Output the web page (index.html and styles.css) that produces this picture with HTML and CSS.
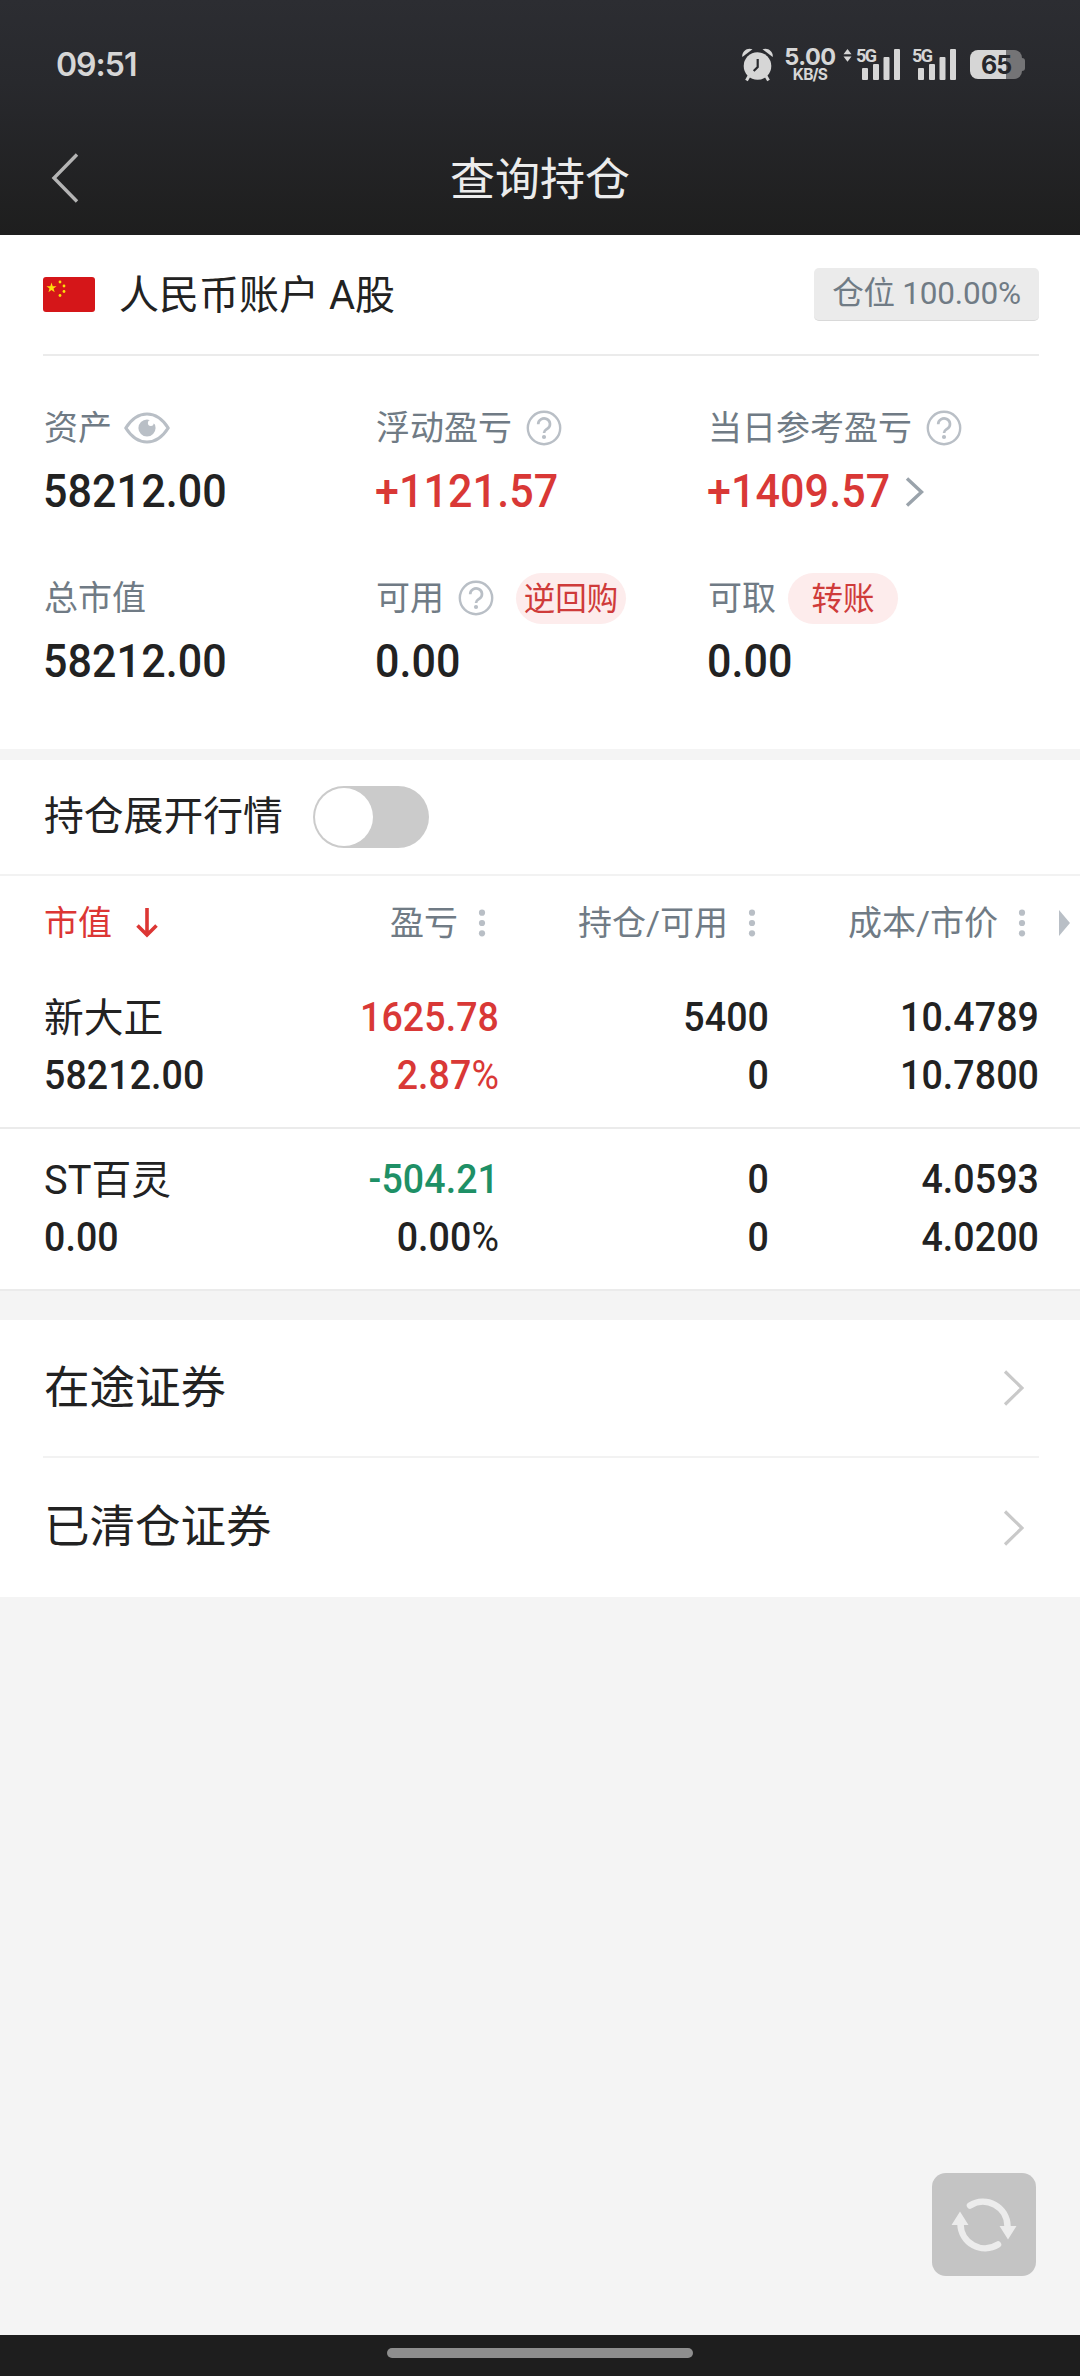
FILE: index.html
```html
<!DOCTYPE html>
<html lang="zh-CN">
<head>
<meta charset="utf-8">
<title>查询持仓</title>
<link rel="stylesheet" href="styles.css">
</head>
<body>
<svg class="defs" width="0" height="0" aria-hidden="true">
  <symbol id="help" viewBox="0 0 36 36">
    <circle cx="18" cy="18" r="16.2" fill="none" stroke="#b9bfc6" stroke-width="2.4"/>
    <path d="M12.2 14.2a5.9 5.6 0 1 1 9.3 4.4c-2 1.4-3.5 2-3.5 4.4" fill="none" stroke="#b9bfc6" stroke-width="2.7"/>
    <circle cx="18" cy="27" r="2.1" fill="#b9bfc6"/>
  </symbol>
  <symbol id="dots" viewBox="0 0 8 28">
    <g fill="#b9bfc6"><circle cx="4" cy="3.7" r="3.1"/><circle cx="4" cy="14" r="3.1"/><circle cx="4" cy="24.3" r="3.1"/></g>
  </symbol>
  <symbol id="next" viewBox="0 0 22 36">
    <path d="M3 1.500L20 18 3 34.500" fill="none" stroke="#c9c9c9" stroke-width="3.2"/>
  </symbol>
  <symbol id="bars" viewBox="0 0 38 31">
    <g fill="#d6d6d6"><rect y="19" width="6" height="12" rx="1"/><rect x="11" y="15" width="6" height="16" rx="1"/><rect x="21.500" y="8" width="6" height="23" rx="1"/><rect x="32" width="6" height="31" rx="1"/></g>
  </symbol>
</svg>

<header class="top">
  <div class="status">
    <span class="clock">09:51</span>
    <div class="tray">
      <svg class="alarm" width="31" height="34" viewBox="0 0 31 34">
        <g fill="#d6d6d6"><circle cx="15.500" cy="18" r="13.800"/>
        <path d="M0.300 9C-0.500 3.500 5 -1 10.500 1.200z"/><path d="M30.700 9C31.500 3.500 26 -1 20.500 1.200z"/></g>
        <path d="M7 28l-2.500 4.500M24 28l2.500 4.500" stroke="#d6d6d6" stroke-width="3"/>
        <path d="M15.700 11v8l-4 4" fill="none" stroke="#292a2e" stroke-width="2.200"/>
      </svg>
      <div class="speed"><span class="speed-num">5.00</span><span class="speed-unit">KB/S</span></div>
      <svg class="updown" width="9" height="13" viewBox="0 0 9 13"><path d="M0.500 5.200L4.500 0l4 5.200zM0.500 7.600l4 5.200 4-5.200z" fill="#d6d6d6"/></svg>
      <div class="signal first"><span class="net">5G</span><svg class="bars" width="38" height="31"><use href="#bars"/></svg></div>
      <div class="signal"><span class="net">5G</span><svg class="bars" width="38" height="31"><use href="#bars"/></svg></div>
      <div class="battery"><span class="charge">65</span><span class="nub"></span></div>
    </div>
  </div>
  <nav class="titlebar">
    <svg class="back" width="28" height="50" viewBox="0 0 28 50"><path d="M26 1.500L3 25l23 23.500" fill="none" stroke="#b4b4b4" stroke-width="3.400"/></svg>
    <h1>查询持仓</h1>
  </nav>
</header>

<section class="account">
  <div class="account-head">
    <svg class="flag" width="52" height="35" viewBox="0 0 52 35">
      <rect width="52" height="35" rx="3" fill="#d51619"/>
      <g fill="#fcdf0c"><path d="M8.500 5.500l1.200 3.700h3.900l-3.100 2.300 1.200 3.700-3.200-2.300-3.100 2.300 1.100-3.700-3.100-2.300h3.900z"/>
      <circle cx="17" cy="5" r="1.400"/><circle cx="21" cy="9" r="1.400"/><circle cx="21" cy="14.500" r="1.400"/><circle cx="17" cy="18.500" r="1.400"/></g>
    </svg>
    <span class="account-name">人民币账户 A股</span>
    <span class="ratio">仓位 100.00%</span>
  </div>
  <div class="stats">
    <div class="stat">
      <div class="label">资产<svg class="eye" width="46" height="32" viewBox="0 0 46 32"><path d="M1.800 16C7.500 7 14.500 2 23 2S38.500 7 44.200 16C38.500 25 31.500 30 23 30S7.500 25 1.800 16z" fill="none" stroke="#b9bfc6" stroke-width="3.200" stroke-linejoin="round"/><circle cx="23" cy="16" r="8.600" fill="#b9bfc6"/><circle cx="26.800" cy="11" r="2.900" fill="#fff"/><path d="M26.500 10.500L26 6l6 3-1 3z" fill="#fff"/></svg></div>
      <div class="value"><span class="num">58212.00</span></div>
    </div>
    <div class="stat">
      <div class="label">浮动盈亏<svg class="help" width="36" height="36"><use href="#help"/></svg></div>
      <div class="value up"><span class="num">+1121.57</span></div>
    </div>
    <div class="stat">
      <div class="label">当日参考盈亏<svg class="help" width="36" height="36"><use href="#help"/></svg></div>
      <div class="value up"><span class="num">+1409.57</span><svg class="more" width="19" height="30" viewBox="0 0 19 30"><path d="M2 1.500L16.500 15 2 28.500" fill="none" stroke="#9aa3ab" stroke-width="3.400"/></svg></div>
    </div>
    <div class="stat">
      <div class="label">总市值</div>
      <div class="value"><span class="num">58212.00</span></div>
    </div>
    <div class="stat">
      <div class="label">可用<svg class="help" width="36" height="36"><use href="#help"/></svg><span class="pill repo">逆回购</span></div>
      <div class="value"><span class="num">0.00</span></div>
    </div>
    <div class="stat">
      <div class="label">可取<span class="pill transfer">转账</span></div>
      <div class="value"><span class="num">0.00</span></div>
    </div>
  </div>
</section>

<section class="holdings">
  <div class="expand"><span>持仓展开行情</span><span class="switch"><span class="knob"></span></span></div>
  <div class="row head">
    <div class="first-head">市值<svg class="sort" width="22" height="30" viewBox="0 0 22 30"><path d="M11 0v26M1.500 17.500L11 27l9.500-9.500" fill="none" stroke="#dc3634" stroke-width="3.600"/></svg></div>
    <div class="col-head">盈亏<svg class="dots" width="8" height="28"><use href="#dots"/></svg></div>
    <div class="col-head">持仓/可用<svg class="dots" width="8" height="28"><use href="#dots"/></svg></div>
    <div class="col-head">成本/市价<svg class="dots" width="8" height="28"><use href="#dots"/></svg></div>
    <svg class="scroll" width="11" height="26" viewBox="0 0 11 26"><path d="M0 0l11 13L0 26z" fill="#b9bfc6"/></svg>
  </div>
  <div class="row item">
    <div class="cell name"><span class="stock">新大正</span><span class="num">58212.00</span></div>
    <div class="cell up"><span class="num">1625.78</span><span class="num">2.87<i class="pct">%</i></span></div>
    <div class="cell"><span class="num">5400</span><span class="num">0</span></div>
    <div class="cell"><span class="num">10.4789</span><span class="num">10.7800</span></div>
  </div>
  <div class="row item">
    <div class="cell name"><span class="stock">ST百灵</span><span class="num">0.00</span></div>
    <div class="cell"><span class="num down">-504.21</span><span class="num">0.00<i class="pct">%</i></span></div>
    <div class="cell"><span class="num">0</span><span class="num">0</span></div>
    <div class="cell"><span class="num">4.0593</span><span class="num">4.0200</span></div>
  </div>
</section>

<section class="links">
  <div class="link"><span>在途证券</span><svg class="next" width="22" height="36"><use href="#next"/></svg></div>
  <div class="link"><span>已清仓证券</span><svg class="next" width="22" height="36"><use href="#next"/></svg></div>
</section>

<main class="blank">
  <div class="refresh">
    <svg width="66" height="58" viewBox="0 0 66 58">
      <path d="M19 9.500A24.500 24.500 0 0 1 56.500 30" fill="none" stroke="#ececec" stroke-width="6.500" stroke-linecap="round"/>
      <path d="M47 48.500A24.500 24.500 0 0 1 9.500 28" fill="none" stroke="#ececec" stroke-width="6.500" stroke-linecap="round"/>
      <path d="M48.500 30h17l-8.500 13.500z M0.500 29h17L9 15.500z" fill="#ececec"/>
    </svg>
  </div>
</main>
<footer class="gesture"><span class="handle"></span></footer>
</body>
</html>
```

FILE: styles.css
```css
* { box-sizing: border-box; }
body {
  margin: 0;
  width: 1080px;
  height: 2376px;
  display: flex;
  flex-direction: column;
  background: #f4f4f4;
  color: #222;
  font-family: Roboto, "Noto Sans CJK SC", sans-serif;
}
svg { display: block; flex: none; }
.defs { position: absolute; }

.top {
  height: 235px;
  background: linear-gradient(#2c2d32, #28292d 35%, #1e1e1e);
}
.status {
  display: flex;
  justify-content: space-between;
  height: 128px;
  padding: 0 55px 0 56px;
  color: #d6d6d6;
}
.clock { font: 600 32px/130px Inter, sans-serif; letter-spacing: -1px; }
.tray { display: flex; padding-top: 48px; }
.speed {
  width: 52px;
  margin-left: 11px;
  display: flex;
  flex-direction: column;
  align-items: center;
  font-family: Inter, sans-serif;
}
.speed-num { font-size: 23.500px; font-weight: 700; line-height: 17px; letter-spacing: -0.500px; }
.speed-unit { font-size: 15.500px; font-weight: 700; line-height: 15px; letter-spacing: -0.800px; margin-top: 2px; }
.updown { margin: 1px 0 0 7px; }
.signal { position: relative; width: 44px; height: 32px; margin-left: 12px; }
.signal.first { margin-left: 4px; }
.net { position: absolute; left: 0; top: 0; font: 700 18px/15px Roboto, sans-serif; letter-spacing: -1.700px; }
.bars { margin: 1px 0 0 6px; }
.battery {
  display: flex;
  align-items: center;
  height: 29px;
  margin: 2px 0 0 14px;
}
.charge {
  width: 52px;
  height: 29px;
  border-radius: 8px;
  background: linear-gradient(90deg, #d6d6d6 36px, #747476 36px);
  color: #26272b;
  font: 700 25px/30px Inter, sans-serif;
  letter-spacing: -1px;
  text-align: center;
}
.nub { width: 3px; height: 13px; border-radius: 0 4px 4px 0; background: #747476; }
.titlebar {
  display: grid;
  grid-template-columns: 28px 1fr 28px;
  align-items: center;
  height: 100px;
  padding: 0 51px;
}
.titlebar h1 {
  margin: 0;
  padding-top: 5px;
  color: #ececec;
  font-size: 45px;
  font-weight: 400;
  line-height: 60px;
  text-align: center;
}

.account { height: 514px; padding: 0 41px 0 43px; background: #fff; }
.account-head {
  display: flex;
  align-items: center;
  height: 121px;
  border-bottom: 2px solid #ebebeb;
}
.account-name { margin-left: 24px; padding-top: 2px; font-size: 40px; line-height: 56px; }
.ratio {
  width: 225px;
  height: 53px;
  margin-left: auto;
  border-radius: 5px;
  border-bottom: 1px solid #d9d9d9;
  background: #ebebeb;
  color: #707b85;
  font-size: 31.500px;
  line-height: 52px;
  letter-spacing: -0.200px;
  text-align: center;
}
.stats {
  display: grid;
  grid-template-columns: 332px 332px 1fr;
  grid-auto-rows: 170px;
  padding-top: 45px;
}
.label {
  display: flex;
  align-items: center;
  height: 54px;
  padding-left: 1px;
  color: #707b85;
  font-size: 34px;
  line-height: 54px;
}
.eye { margin-left: 12px; }
.help { margin-left: 14px; }
.pill {
  width: 110px;
  height: 51px;
  margin-left: 12px;
  border-radius: 26px;
  background: #fdecec;
  color: #cf3b3a;
  font-size: 31.500px;
  line-height: 53px;
  text-align: center;
}
.repo { margin-left: 22px; }
.value {
  display: flex;
  align-items: center;
  height: 60px;
  margin-top: 6px;
  font-size: 46.500px;
  font-weight: 500;
}
/* Figures are set slightly condensed. */
.num {
  letter-spacing: 0.100px;
  transform: scaleX(0.925);
  transform-origin: right;
}
.cell .num { transform: scaleX(0.915); }
.value .num, .name .num { transform-origin: left; }
.more { margin-top: 2px; }
.up { color: #d93836; }
.down { color: #1e9066; }

.holdings { margin-top: 11px; background: #fff; }
.expand {
  display: flex;
  align-items: center;
  height: 116px;
  padding-left: 44px;
  border-bottom: 2px solid #f2f2f2;
  font-size: 39.800px;
  line-height: 114px;
}
.switch {
  width: 116px;
  height: 62px;
  margin-left: 30px;
  padding: 2px;
  border-radius: 31px;
  background: #cbcbcb;
}
.knob { display: block; width: 58px; height: 58px; border-radius: 50%; background: #fff; }
.row {
  display: grid;
  grid-template-columns: 185px 270px 270px 270px 41px;
  padding-left: 44px;
}
.head { height: 93px; align-items: center; color: #707b85; font-size: 34px; line-height: 54px; }
.first-head { display: flex; align-items: center; color: #dc3634; }
.sort { margin-left: 24px; }
.col-head { display: flex; align-items: center; justify-content: flex-end; padding-right: 13px; }
.dots { margin-left: 20px; }
.scroll { margin-left: 20px; }
.item { height: 160px; padding-top: 20px; border-bottom: 2px solid #ebebeb; }
.item + .item { height: 162px; padding-top: 22px; }
.cell {
  display: grid;
  grid-auto-rows: 57.500px;
  line-height: 57px;
  font-size: 41px;
  font-weight: 500;
  text-align: right;
}
.cell.name { text-align: left; white-space: nowrap; }
.stock { padding-top: 1px; font-size: 39.800px; font-weight: 400; }
.pct { font-style: normal; font-weight: 400; }

.links { margin-top: 29px; padding: 0 41px 0 43px; background: #fff; }
.link {
  display: flex;
  align-items: center;
  justify-content: space-between;
  height: 139px;
  padding: 0 15px 0 1px;
  font-size: 45.500px;
  line-height: 60px;
}
.link span { padding-top: 1px; }
.link:first-child { height: 138px; border-bottom: 2px solid #f2f2f2; }

.blank {
  flex: 1;
  display: flex;
  align-items: flex-end;
  justify-content: flex-end;
  padding: 0 44px 59px 0;
}
.refresh {
  display: grid;
  place-items: center;
  width: 104px;
  height: 103px;
  border-radius: 14px;
  background: #c4c4c4;
}
.gesture {
  display: grid;
  justify-content: center;
  height: 41px;
  padding-top: 13px;
  background: #1e1e1e;
}
.handle { width: 306px; height: 10px; border-radius: 5px; background: #8e8e8e; }
```
